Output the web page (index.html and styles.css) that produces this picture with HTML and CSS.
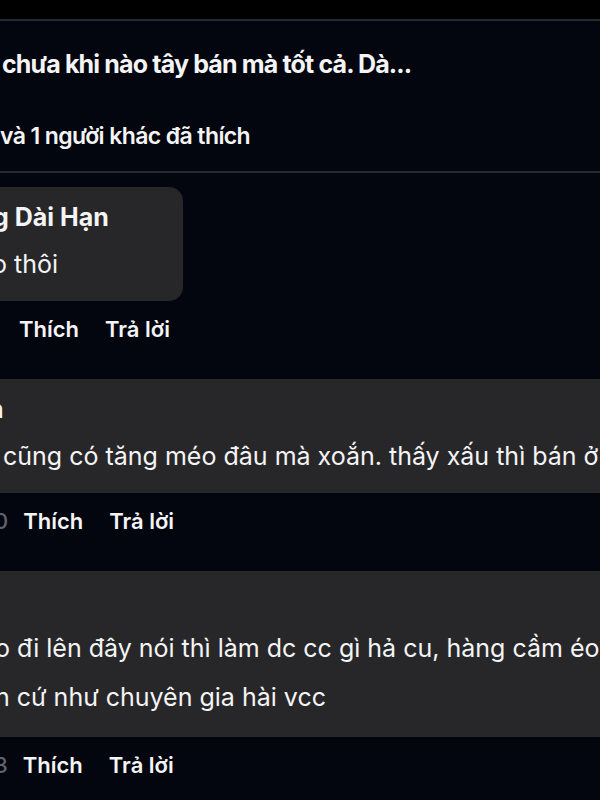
FILE: index.html
```html
<!DOCTYPE html>
<html lang="vi">
<head>
    <meta charset="UTF-8">
    <meta name="viewport" content="width=device-width, initial-scale=1.0">
    <title>Bình luận</title>
    <link rel="stylesheet" href="styles.css">
</head>
<body>
    <div class="topbar"></div>
    <div class="post">
        <h1 class="post-title">chưa khi nào tây bán mà tốt cả. Dà...</h1>
        <div class="post-likes">và 1 người khác đã thích</div>
    </div>

    <div class="comments">
        <div class="comment">
            <div class="bubble bubble-short">
                <div class="name cut-g">g Dài Hạn</div>
                <div class="text cut-o">o thôi</div>
            </div>
            <div class="actions actions-first">
                <span class="action">Thích</span>
                <span class="action">Trả lời</span>
            </div>
        </div>

        <div class="comment">
            <div class="bubble">
                <div class="name cut-n">n</div>
                <div class="text">cũng có tăng méo đâu mà xoắn. thấy xấu thì bán ở đâu</div>
            </div>
            <div class="actions">
                <span class="count">0</span>
                <span class="action">Thích</span>
                <span class="action">Trả lời</span>
            </div>
        </div>

        <div class="comment">
            <div class="bubble bubble-long">
                <div class="name">&nbsp;</div>
                <div class="text cut-o">o đi lên đây nói thì làm dc cc gì hả cu, hàng cầm éo</div>
                <div class="text cut-n2">n cứ như chuyên gia hài vcc</div>
            </div>
            <div class="actions">
                <span class="count">3</span>
                <span class="action">Thích</span>
                <span class="action">Trả lời</span>
            </div>
        </div>
    </div>
</body>
</html>
```

FILE: styles.css
```css
body {
    margin: 0;
    padding: 0;
    background: #03060f;
    color: #f4f4f5;
    font-family: 'Inter', 'Noto Sans', sans-serif;
    overflow: hidden;
    height: 800px;
}
.topbar {
    height: 19px;
    background: #000000;
    border-bottom: 2px solid #262932;
}
.post {
    padding-top: 26px;
    padding-bottom: 23px;
    border-bottom: 2px solid #262932;
}
.post-title {
    margin: 0;
    padding-left: 2px;
    font-size: 25px;
    font-weight: 700;
    letter-spacing: -0.85px;
    line-height: 34px;
    white-space: nowrap;
}
.post-likes {
    margin-top: 43px;
    font-size: 23px;
    font-weight: 600;
    letter-spacing: -0.6px;
    line-height: 24px;
    white-space: nowrap;
}
.comments {
    padding-top: 14px;
    overflow: hidden;
}
.comment {
    margin-bottom: 29px;
}
.bubble {
    background: #27272a;
    margin-left: -20px;
    margin-right: -20px;
    padding: 8px 0 12px 23px;
    white-space: nowrap;
    overflow: hidden;
}
.bubble-short {
    width: 203px;
    margin-right: 0;
    padding-left: 20px;
    border-radius: 0 14px 14px 0;
    box-sizing: border-box;
}
.bubble-long {
    padding-bottom: 15px;
}
.name {
    font-size: 25px;
    font-weight: 700;
    line-height: 45px;
}
.text {
    font-size: 25px;
    font-weight: 400;
    line-height: 49px;
}
.cut-g {
    text-indent: -7px;
}
.cut-o {
    text-indent: -8px;
}
.cut-n {
    text-indent: -15px;
}
.cut-n2 {
    text-indent: -8px;
}
.actions {
    display: flex;
    align-items: center;
    margin-top: 7px;
    height: 42px;
    font-size: 22px;
    font-weight: 600;
    margin-left: -6px;
}
.actions-first {
    margin-left: 19px;
}
.count {
    color: #5f636e;
    margin-right: 15px;
    font-weight: 500;
}
.action {
    margin-right: 26px;
}
```
